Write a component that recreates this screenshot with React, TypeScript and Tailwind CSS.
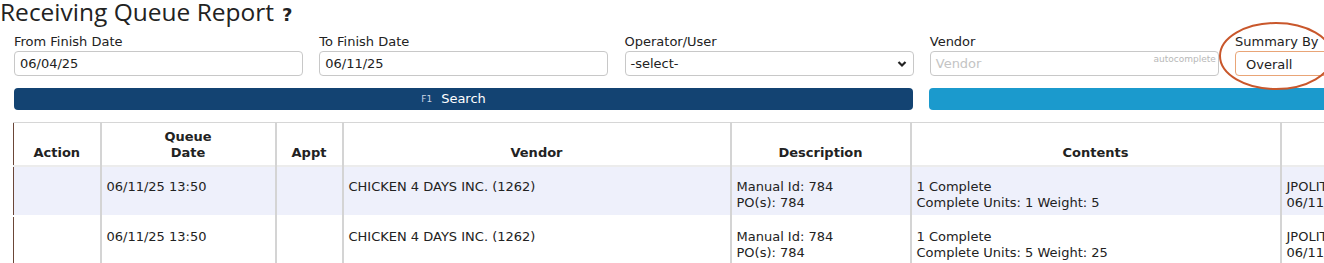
import React from "react";

const font = { fontFamily: '"DejaVu Sans", Verdana, sans-serif' };

const Field = ({ label, children }: { label: string; children: React.ReactNode }) => (
  <div className="flex w-[289px] shrink-0 flex-col">
    <label className="h-[19px] pt-[2px] text-[13px] leading-[16px] text-[#222]">{label}</label>
    <div>{children}</div>
  </div>
);

const rows = [
  { date: "06/11/25 13:50", vendor: "CHICKEN 4 DAYS INC. (1262)", units: "1", weight: "5", bg: "bg-[#eef0fb]" },
  { date: "06/11/25 13:50", vendor: "CHICKEN 4 DAYS INC. (1262)", units: "5", weight: "25", bg: "bg-white" },
];

const App = () => {
  return (
    <div className="relative h-[263px] w-[1324px] overflow-hidden bg-white text-[#222]" style={font}>
      {/* title */}
      <h1
        className="mt-[-9px] flex items-center whitespace-nowrap text-[24.5px] leading-[36px] text-[#222]"
        style={{ fontFamily: '"Open Sans", sans-serif' }}
      >
        Receiving Queue Report
        <span className="ml-[8px] mt-[6px] text-[18px] font-bold" style={font}>?</span>
      </h1>

      {/* filters */}
      <div className="ml-[14px] mt-[-1px] flex gap-[16.25px]">
        <Field label="From Finish Date">
          <div className="flex h-[25px] items-center rounded-[4px] border border-[#c8c8c8] px-[5px] text-[13px]">06/04/25</div>
        </Field>
        <Field label="To Finish Date">
          <div className="flex h-[25px] items-center rounded-[4px] border border-[#c8c8c8] px-[5px] text-[13px]">06/11/25</div>
        </Field>
        <Field label="Operator/User">
          <div className="flex h-[25px] items-center justify-between rounded-[4px] border border-[#c8c8c8] pl-[5px] pr-[6px] text-[13px]">
            <span>-select-</span>
            <svg width="10" height="8" viewBox="0 0 10 8">
              <path d="M1.5 2 L5 5.5 L8.5 2" stroke="#222" strokeWidth="2.2" fill="none" />
            </svg>
          </div>
        </Field>
        <Field label="Vendor">
          <div className="relative flex h-[25px] items-center rounded-[4px] border border-[#c8c8c8] px-[5px] text-[13px] text-[#c4c4c4]">
            Vendor
            <span className="absolute right-[2px] top-[2px] text-[9px] leading-[10px] text-[#b8b8b8]">autocomplete</span>
          </div>
        </Field>
        <Field label="Summary By">
          <div className="flex h-[25px] items-center rounded-[4px] border border-[#e9a577] px-[10px] pt-[2px] text-[13px]">Overall</div>
        </Field>
      </div>

      {/* buttons */}
      <div className="ml-[14px] mt-[12px] flex gap-[16.25px]">
        <button className="relative flex h-[22px] w-[899px] shrink-0 items-center justify-center rounded-[4px] bg-[#134372] text-white">
          <span className="relative text-[13px]">
            <span className="absolute right-[calc(100%+9px)] top-[5px] text-[9px] leading-[10px] text-[#c8d4e4]">F1</span>
            Search
          </span>
        </button>
        <button className="h-[22px] w-[600px] shrink-0 rounded-[4px] bg-[#1b9acd]" />
      </div>

      {/* table */}
      <table className="ml-[13px] mt-[12px] w-[1400px] table-fixed border-collapse border-l border-t border-l-[#6b4638] border-t-[#d6d6d6] text-[13px] leading-[16px]">
        <colgroup>
          <col className="w-[87px]" />
          <col className="w-[175px]" />
          <col className="w-[67px]" />
          <col className="w-[388px]" />
          <col className="w-[180px]" />
          <col className="w-[370px]" />
          <col className="w-[133px]" />
        </colgroup>
        <thead>
          <tr className="h-[43px] border-b-2 border-[#ececec] font-bold">
            {["Action", "Queue\nDate", "Appt", "Vendor", "Description", "Contents", ""].map((h, i) => (
              <th
                key={i}
                className="whitespace-pre-line border-r-2 border-[#d4d4d4] px-[5px] pb-[4px] text-center align-bottom font-bold"
              >
                {h}
              </th>
            ))}
          </tr>
        </thead>
        <tbody>
          {rows.map((r, i) => (
            <tr key={i} className={`h-[50px] border-b-2 border-white ${r.bg}`}>
              <td className="border-r-2 border-[#d4d4d4] px-[5px] pt-[12px] align-top"></td>
              <td className="border-r-2 border-[#d4d4d4] px-[5px] pt-[12px] align-top">{r.date}</td>
              <td className="border-r-2 border-[#d4d4d4] px-[5px] pt-[12px] align-top"></td>
              <td className="border-r-2 border-[#d4d4d4] px-[5px] pt-[12px] align-top whitespace-nowrap">{r.vendor}</td>
              <td className="border-r-2 border-[#d4d4d4] px-[5px] pt-[12px] align-top whitespace-nowrap">
                Manual Id: 784
                <br />
                PO(s): 784
              </td>
              <td className="border-r-2 border-[#d4d4d4] px-[5px] pt-[12px] align-top whitespace-nowrap">
                1 Complete
                <br />
                Complete Units: {r.units} Weight: {r.weight}
              </td>
              <td className="border-r-2 border-[#d4d4d4] px-[5px] pt-[12px] align-top whitespace-nowrap">
                JPOLITO
                <br />
                06/11/25 13:50
              </td>
            </tr>
          ))}
        </tbody>
      </table>

      {/* annotation circle */}
      <svg className="pointer-events-none absolute left-[1218px] top-[21px]" width="140" height="72" viewBox="0 0 140 72">
        <ellipse cx="58" cy="35" rx="56" ry="33" fill="none" stroke="#c9572b" strokeWidth="2" />
      </svg>
    </div>
  );
};

export default App;
